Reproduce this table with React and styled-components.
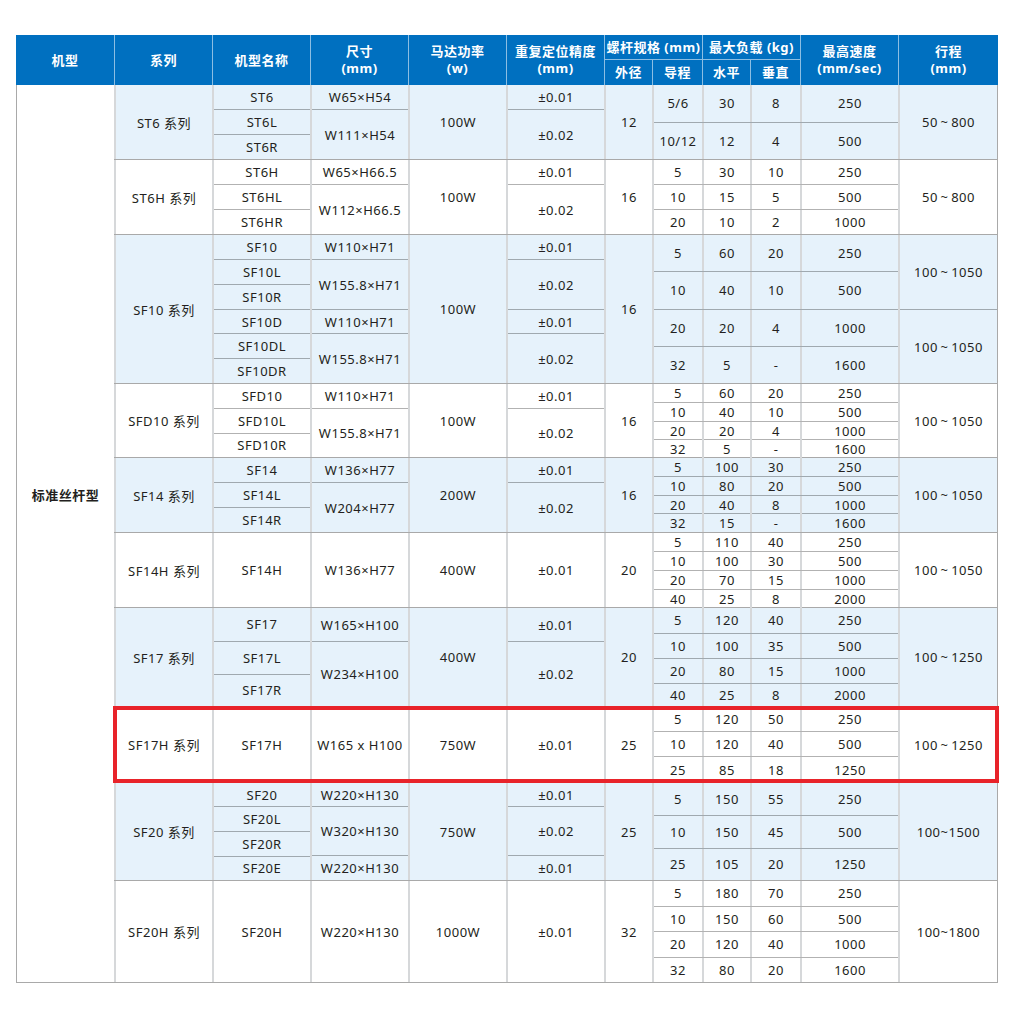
import React from 'react'
import styled, { createGlobalStyle, css } from 'styled-components'

const BLUE = '#0070c0'
const TINT = '#e6f2fb'
const RULE = '#a9a9a9'
const SUB = 'rgba(0,0,0,0.3)'
const VLINE = '#d6d8da'
const HLINE = 'rgba(255,255,255,0.55)'

const GlobalStyle = createGlobalStyle`
  *, *::before, *::after { box-sizing: border-box; }
  html, body { margin: 0; padding: 0; background: #fff; }
  body {
    font-family: "Noto Sans", "Noto Sans CJK SC", sans-serif;
    color: #231f20;
  }
`

const Page = styled.div`
  padding: 35px 15px 30px 16px;
`

const Table = styled.div`
  width: 982px;
  font-size: 13px;
  letter-spacing: 0.5px;
`

const Header = styled.div`
  display: grid;
  grid-template-columns: 98px 98px 98px 98px 98px 98px 48px 50px 48px 50px 98px 100px;
  grid-template-rows: 25px 25px;
  height: 50px;
  background: ${BLUE};
  color: #fff;
  font-weight: 700;
`

const HCell = styled.div`
  grid-column: ${p => p.$col};
  grid-row: ${p => p.$row || '1 / 3'};
  display: flex;
  flex-direction: column;
  align-items: center;
  justify-content: center;
  line-height: 17px;
  white-space: nowrap;
  border-left: ${p => (p.$first ? 'none' : `1px solid ${HLINE}`)};
  border-bottom: ${p => (p.$top ? `1px solid ${HLINE}` : 'none')};
`

const Body = styled.div`
  display: flex;
  border: 1px solid ${RULE};
  border-top: none;
`

const ModelType = styled.div`
  width: 97px;
  display: flex;
  align-items: center;
  justify-content: center;
  padding-bottom: 78px;
  font-weight: 700;
`

const Groups = styled.div`
  width: 883px;
  display: flex;
  flex-direction: column;
`

const Group = styled.div`
  position: relative;
  display: grid;
  grid-template-columns: 98px 98px 98px 98px 98px 48px 246px 99px;
  height: ${p => p.$h}px;
  background: ${p => (p.$tint ? TINT : '#fff')};
  border-bottom: ${p => (p.$last ? 'none' : `1px solid ${RULE}`)};
  ${p => p.$mark && css`
    &::after {
      content: '';
      position: absolute;
      inset: -1px -2px -1px -1px;
      border: 4px solid #e8232a;
      pointer-events: none;
      z-index: 2;
    }
  `}
`

const Col = styled.div`
  display: flex;
  flex-direction: column;
  min-width: 0;
  border-left: 2px solid ${VLINE};
`

const Cell = styled.div`
  flex: ${p => p.$h} 1 0;
  min-height: 0;
  display: flex;
  align-items: center;
  justify-content: center;
  white-space: nowrap;
  border-bottom: 1px solid ${SUB};
  &:last-child { border-bottom: none; }
`

const SpecRow = styled.div`
  flex: ${p => p.$h} 1 0;
  min-height: 0;
  display: grid;
  grid-template-columns: 48px 48px 50px 98px;
  border-bottom: 1px solid ${SUB};
  &:last-child { border-bottom: none; }
`

const SpecCell = styled.div`
  display: flex;
  align-items: center;
  justify-content: center;
  white-space: nowrap;
  & + & { border-left: 2px solid ${VLINE}; }
`

const T = '\u2009~\u2009'

const groups = [
  { tint: true, h: 75, series: 'ST6 系列',
    names: [['ST6', 1], ['ST6L', 1], ['ST6R', 1]],
    sizes: [['W65×H54', 1], ['W111×H54', 2]],
    power: '100W',
    prec: [['±0.01', 1], ['±0.02', 2]],
    dia: '12',
    specs: [[38, '5/6', '30', '8', '250'], [37, '10/12', '12', '4', '500']],
    strokes: [['50' + T + '800', 1]] },
  { h: 75, series: 'ST6H 系列',
    names: [['ST6H', 1], ['ST6HL', 1], ['ST6HR', 1]],
    sizes: [['W65×H66.5', 1], ['W112×H66.5', 2]],
    power: '100W',
    prec: [['±0.01', 1], ['±0.02', 2]],
    dia: '16',
    specs: [[25, '5', '30', '10', '250'], [25, '10', '15', '5', '500'], [25, '20', '10', '2', '1000']],
    strokes: [['50' + T + '800', 1]] },
  { tint: true, h: 149, series: 'SF10 系列',
    names: [['SF10', 25], ['SF10L', 25], ['SF10R', 25], ['SF10D', 24], ['SF10DL', 25], ['SF10DR', 25]],
    sizes: [['W110×H71', 25], ['W155.8×H71', 50], ['W110×H71', 24], ['W155.8×H71', 50]],
    power: '100W',
    prec: [['±0.01', 25], ['±0.02', 50], ['±0.01', 24], ['±0.02', 50]],
    dia: '16',
    specs: [[37, '5', '60', '20', '250'], [38, '10', '40', '10', '500'], [37, '20', '20', '4', '1000'], [37, '32', '5', '-', '1600']],
    strokes: [['100' + T + '1050', 75], ['100' + T + '1050', 74]] },
  { h: 74, series: 'SFD10 系列',
    names: [['SFD10', 25], ['SFD10L', 25], ['SFD10R', 24]],
    sizes: [['W110×H71', 25], ['W155.8×H71', 49]],
    power: '100W',
    prec: [['±0.01', 25], ['±0.02', 49]],
    dia: '16',
    specs: [[19, '5', '60', '20', '250'], [19, '10', '40', '10', '500'], [18, '20', '20', '4', '1000'], [18, '32', '5', '-', '1600']],
    strokes: [['100' + T + '1050', 1]] },
  { tint: true, h: 75, series: 'SF14 系列',
    names: [['SF14', 1], ['SF14L', 1], ['SF14R', 1]],
    sizes: [['W136×H77', 1], ['W204×H77', 2]],
    power: '200W',
    prec: [['±0.01', 1], ['±0.02', 2]],
    dia: '16',
    specs: [[19, '5', '100', '30', '250'], [19, '10', '80', '20', '500'], [18, '20', '40', '8', '1000'], [19, '32', '15', '-', '1600']],
    strokes: [['100' + T + '1050', 1]] },
  { h: 75, series: 'SF14H 系列',
    names: [['SF14H', 1]],
    sizes: [['W136×H77', 1]],
    power: '400W',
    prec: [['±0.01', 1]],
    dia: '20',
    specs: [[19, '5', '110', '40', '250'], [19, '10', '100', '30', '500'], [19, '20', '70', '15', '1000'], [18, '40', '25', '8', '2000']],
    strokes: [['100' + T + '1050', 1]] },
  { tint: true, h: 99, series: 'SF17 系列',
    names: [['SF17', 34], ['SF17L', 33], ['SF17R', 32]],
    sizes: [['W165×H100', 34], ['W234×H100', 65]],
    power: '400W',
    prec: [['±0.01', 34], ['±0.02', 65]],
    dia: '20',
    specs: [[26, '5', '120', '40', '250'], [25, '10', '100', '35', '500'], [25, '20', '80', '15', '1000'], [23, '40', '25', '8', '2000']],
    strokes: [['100' + T + '1250', 1]] },
  { h: 76, mark: true, series: 'SF17H 系列',
    names: [['SF17H', 1]],
    sizes: [['W165 x H100', 1]],
    power: '750W',
    prec: [['±0.01', 1]],
    dia: '25',
    specs: [[25, '5', '120', '50', '250'], [25, '10', '120', '40', '500'], [26, '25', '85', '18', '1250']],
    strokes: [['100' + T + '1250', 1]] },
  { tint: true, h: 98, series: 'SF20 系列',
    names: [['SF20', 24], ['SF20L', 25], ['SF20R', 25], ['SF20E', 24]],
    sizes: [['W220×H130', 24], ['W320×H130', 49], ['W220×H130', 25]],
    power: '750W',
    prec: [['±0.01', 24], ['±0.02', 49], ['±0.01', 25]],
    dia: '25',
    specs: [[33, '5', '150', '55', '250'], [33, '10', '150', '45', '500'], [32, '25', '105', '20', '1250']],
    strokes: [['100~1500', 1]] },
  { h: 101, series: 'SF20H 系列',
    names: [['SF20H', 1]],
    sizes: [['W220×H130', 1]],
    power: '1000W',
    prec: [['±0.01', 1]],
    dia: '32',
    specs: [[26, '5', '180', '70', '250'], [25, '10', '150', '60', '500'], [26, '20', '120', '40', '1000'], [25, '32', '80', '20', '1600']],
    strokes: [['100~1800', 1]] },
]

const Stack = ({ items }) => (
  <Col>
    {items.map(([text, h], i) => <Cell key={i} $h={h}>{text}</Cell>)}
  </Col>
)

const Single = ({ text }) => <Stack items={[[text, 1]]} />

const SeriesGroup = ({ g, last }) => (
  <Group $h={g.h} $tint={g.tint} $mark={g.mark} $last={last}>
    <Single text={g.series} />
    <Stack items={g.names} />
    <Stack items={g.sizes} />
    <Single text={g.power} />
    <Stack items={g.prec} />
    <Single text={g.dia} />
    <Col>
      {g.specs.map(([h, ...vals], i) => (
        <SpecRow key={i} $h={h}>
          {vals.map((v, j) => <SpecCell key={j}>{v}</SpecCell>)}
        </SpecRow>
      ))}
    </Col>
    <Stack items={g.strokes} />
  </Group>
)

export default function App() {
  return (
    <Page>
      <GlobalStyle />
      <Table>
        <Header>
          <HCell $col="1" $first>机型</HCell>
          <HCell $col="2">系列</HCell>
          <HCell $col="3">机型名称</HCell>
          <HCell $col="4"><span>尺寸</span><span>(mm)</span></HCell>
          <HCell $col="5"><span>马达功率</span><span>(w)</span></HCell>
          <HCell $col="6"><span>重复定位精度</span><span>(mm)</span></HCell>
          <HCell $col="7 / 9" $row="1" $top>螺杆规格 (mm)</HCell>
          <HCell $col="9 / 11" $row="1" $top>最大负载 (kg)</HCell>
          <HCell $col="11"><span>最高速度</span><span>(mm/sec)</span></HCell>
          <HCell $col="12"><span>行程</span><span>(mm)</span></HCell>
          <HCell $col="7" $row="2">外径</HCell>
          <HCell $col="8" $row="2">导程</HCell>
          <HCell $col="9" $row="2">水平</HCell>
          <HCell $col="10" $row="2">垂直</HCell>
        </Header>
        <Body>
          <ModelType>标准丝杆型</ModelType>
          <Groups>
            {groups.map((g, i) => (
              <SeriesGroup key={g.series} g={g} last={i === groups.length - 1} />
            ))}
          </Groups>
        </Body>
      </Table>
    </Page>
  )
}
